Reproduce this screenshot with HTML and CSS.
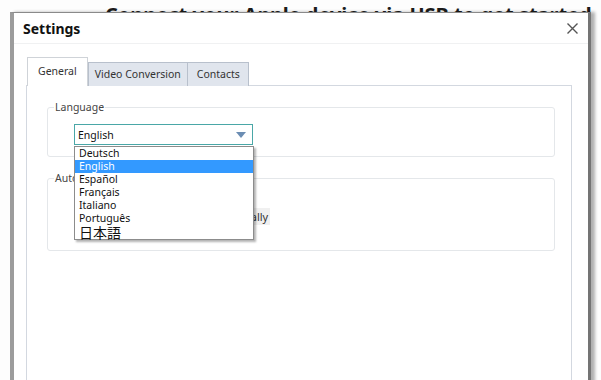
FILE: index.html
```html
<!DOCTYPE html>
<html lang="en">
<head>
  <meta charset="UTF-8">
  <title>Settings</title>
  <link rel="stylesheet" href="styles.css">
</head>
<body>

  <div class="app">
    <div class="rail rail-left"></div>
    <div class="rail rail-right"></div>
    <h2 class="app-title">Connect your Apple device via USB to get started</h2>
  </div>

  <div class="dialog">
    <div class="dialog-head">
      <span class="dialog-title">Settings</span>
      <button class="close" aria-label="Close">
        <svg width="11" height="11" viewBox="0 0 11 11">
          <path d="M0.5 0.5 L10.5 10.5 M10.5 0.5 L0.5 10.5" stroke="#555" stroke-width="1.4" fill="none"/>
        </svg>
      </button>
    </div>

    <div class="dialog-body">
      <div class="tabs">
        <div class="tab active">General</div>
        <div class="tab">Video Conversion</div>
        <div class="tab">Contacts</div>
      </div>

      <div class="tab-panel">
        <fieldset class="group">
          <legend>Language</legend>
          <div class="select-wrap">
            <div class="select">
              <span>English</span>
              <span class="arrow"></span>
            </div>
            <ul class="options">
              <li>Deutsch</li>
              <li class="selected">English</li>
              <li>Español</li>
              <li>Français</li>
              <li>Italiano</li>
              <li>Português</li>
              <li class="jp">日本語</li>
            </ul>
          </div>
        </fieldset>

        <fieldset class="group group-auto">
          <legend>Auto Update</legend>
          <label class="check">
            <span class="box"></span>
            <span class="check-text">Check for updates automatically</span>
          </label>
        </fieldset>
      </div>
    </div>
  </div>

</body>
</html>
```

FILE: styles.css
```css
body {
  margin: 0;
  width: 601px;
  height: 380px;
  overflow: hidden;
  position: relative;
  background-color: #fdfdfd;
  font-family: "Noto Sans", "Open Sans", sans-serif;
  color: #222;
}

.app {
  height: 380px;
}

.app-title {
  margin: 0;
  padding: 3px 0 0 105px;
  font-size: 20px;
  line-height: 24px;
  font-weight: bold;
  white-space: nowrap;
  color: #1c1c1c;
}

.rail {
  position: absolute;
  width: 4px;
  background-color: #1f8c88;
}

.rail-left { left: 10px; top: 35px; height: 36px; }
.rail-right { left: 587px; top: 150px; height: 110px; }

.dialog {
  position: absolute;
  left: 10px;
  top: 12px;
  width: 581px;
  height: 400px;
  box-sizing: border-box;
  background-color: #fff;
  border-top: 1px solid #8a8a8a;
  border-left: 4px solid rgba(90, 90, 90, 0.6);
  border-right: 3px solid rgba(70, 70, 70, 0.75);
  box-shadow: 4px 0 3px rgba(0, 0, 0, 0.3);
}

.dialog-head {
  height: 30px;
  border-bottom: 1px solid #f0f1f2;
  display: flex;
  align-items: center;
  justify-content: space-between;
  padding: 0 9px 0 9px;
}

.dialog-title {
  font-size: 14px;
  font-weight: bold;
  color: #111;
}

.close {
  border: none;
  background: none;
  padding: 0;
  width: 11px;
  height: 11px;
  display: flex;
  margin-right: 1px;
}

.dialog-body {
  padding: 13px 16px 0 12px;
}

.tabs {
  display: flex;
  align-items: flex-end;
  padding-left: 1px;
  position: relative;
  z-index: 1;
  margin-bottom: -1px;
}

.tab {
  height: 23px;
  line-height: 23px;
  padding: 0 8px 0 9px;
  font-size: 10.5px;
  color: #333;
  background-color: #e0e5ed;
  border: 1px solid #b8c0cc;
  border-bottom: none;
  margin-left: -1px;
}

.tab:nth-child(2) { margin-left: 0; padding: 0 6px; }

.tab.active {
  height: 28px;
  line-height: 27px;
  padding: 0 10px;
  background-color: #fff;
  border-color: #cfd3d8;
  margin-left: 0;
}

.tab-panel {
  border: 1px solid #d3d8e0;
  height: 320px;
  padding: 15px 16px 0 20px;
}

.group {
  margin: 0 0 15px 0;
  padding: 10px 0 11px 6px;
  border: 1px solid #e4e7ea;
  border-radius: 3px;
  min-width: 0;
}

.group legend {
  font-size: 10.5px;
  color: #444;
  padding: 0 1px;
  line-height: 13px;
}

.group-auto {
  height: 66px;
  padding-top: 0;
}

.select-wrap {
  position: relative;
  width: 179px;
  margin-left: 20px;
}

.select {
  height: 19px;
  border: 1px solid #4aa7a7;
  display: flex;
  align-items: center;
  justify-content: space-between;
  padding: 0 6px 0 3px;
  font-size: 10.5px;
  color: #111;
}

.arrow {
  width: 0;
  height: 0;
  border-left: 5px solid transparent;
  border-right: 5px solid transparent;
  border-top: 6px solid #6b8db3;
}

.options {
  position: absolute;
  top: 22px;
  left: 0;
  width: 178px;
  margin: 0;
  padding: 0;
  list-style: none;
  background-color: #fff;
  border: 1px solid #8c8c8c;
  box-shadow: 2px 2px 2px rgba(0, 0, 0, 0.3);
  z-index: 5;
}

.options li {
  font-size: 10.5px;
  line-height: 13px;
  padding-left: 4px;
  color: #111;
}

.options li.selected {
  background-color: #3399ff;
  color: #fff;
}

.options li.jp {
  font-family: "Noto Sans CJK JP", sans-serif;
  font-size: 14px;
  line-height: 14px;
}

.check {
  display: flex;
  align-items: center;
  gap: 6px;
  margin: 23px 0 0 27px;
  font-size: 11px;
  color: #333;
}

.box {
  width: 11px;
  height: 11px;
  border: 1px solid #999;
}

.check-text {
  background-color: #f0f0f0;
  padding: 1px 2px;
}
```
